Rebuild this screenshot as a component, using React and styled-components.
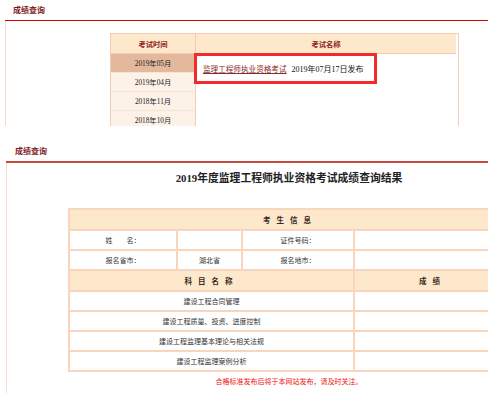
import React from 'react';
import styled, { createGlobalStyle } from 'styled-components';

const GlobalStyle = createGlobalStyle`
  html, body {
    margin: 0;
    padding: 0;
    background: #ffffff;
    overflow: hidden;
  }
  body {
    font-family: "Liberation Serif", "Noto Sans CJK SC", serif;
    color: #333;
  }
`;

const Page = styled.div`
  width: 580px;
`;

const Section = styled.section`
  margin-top: ${(p) => p.$top || 0}px;
`;

const SectionTitle = styled.div`
  height: ${(p) => p.$h}px;
  line-height: ${(p) => p.$h}px;
  padding-left: ${(p) => p.$indent}px;
  font-family: "Noto Sans CJK SC", sans-serif;
  font-size: 8px;
  font-weight: 700;
  color: #7e1a1a;
`;

const Rule = styled.div`
  margin-left: ${(p) => p.$indent}px;
  border-top: ${(p) => p.$thick}px solid ${(p) => p.$color};
`;

const Panel = styled.div`
  margin-left: ${(p) => p.$indent}px;
  width: ${(p) => p.$w}px;
  height: ${(p) => p.$h}px;
  border-left: 1px solid #f8dccb;
  padding-top: ${(p) => p.$pad}px;
  overflow: hidden;
`;

/* ---------- top: exam list ---------- */

const ExamGrid = styled.div`
  display: grid;
  grid-template-columns: 85px 260px;
  grid-template-rows: 20px repeat(4, 19px);
  width: 347px;
  margin: 0 auto;
  border: 1px solid #f1cdb3;
  border-bottom: none;
`;

const HeadCell = styled.div`
  background: #fde8cc;
  border-bottom: 1px solid #f1cdb3;
  border-right: ${(p) => (p.$divider ? '1px solid #f1cdb3' : 'none')};
  display: flex;
  align-items: center;
  justify-content: center;
  font-family: "Noto Sans CJK SC", sans-serif;
  font-size: 7.3px;
  font-weight: 700;
  color: #8e2418;
`;

const MonthCell = styled.div`
  grid-column: 1;
  background: ${(p) => (p.$active ? '#e3b89c' : '#fdf2e8')};
  border-right: 1px solid #f1cdb3;
  border-bottom: 1px solid #f8e2d2;
  display: flex;
  align-items: center;
  justify-content: center;
  font-size: 7.3px;
  color: #222;
`;

const NameCell = styled.div`
  grid-column: 2;
  grid-row: 2 / span 4;
  background: #fff;
`;

const Highlight = styled.div`
  margin: -1px 0 0 -2px;
  width: 183px;
  height: 31px;
  box-sizing: border-box;
  border: 3px solid #f42a2a;
  display: flex;
  align-items: center;
  gap: 5px;
  padding-left: 6px;
`;

const ExamLink = styled.a`
  font-family: "Noto Sans CJK SC", sans-serif;
  font-size: 7.6px;
  color: #8a2a2a;
  text-decoration: underline;
`;

const ExamDate = styled.span`
  font-size: 8px;
  color: #111;
`;

/* ---------- bottom: score result ---------- */

const ResultTitle = styled.h1`
  margin: 6px 0 21px;
  height: 18px;
  line-height: 18px;
  text-align: center;
  font-size: 10.8px;
  font-weight: 700;
  color: #222;
`;

const ScoreGrid = styled.div`
  display: grid;
  grid-template-columns: 106px 63px 110px 155px;
  grid-template-rows: 19px 18px 18px 19px repeat(4, 18px);
  gap: 2px;
  padding: 2px;
  width: 442px;
  box-sizing: border-box;
  margin: 0 auto;
  background: #f8d6bd;
  font-family: "Noto Sans CJK SC", sans-serif;
  font-size: 7px;
  color: #333;
`;

const Cell = styled.div`
  grid-column: ${(p) => p.$span || 'auto'};
  background: ${(p) => (p.$head ? '#fde8cb' : '#ffffff')};
  font-weight: ${(p) => (p.$head ? 700 : 400)};
  letter-spacing: ${(p) => (p.$head ? '6px' : '0')};
  font-size: ${(p) => (p.$head ? '7.5px' : '7px')};
  color: ${(p) => (p.$head ? '#3a2a20' : '#333')};
  display: flex;
  align-items: center;
  justify-content: center;
  white-space: pre;
`;

const Note = styled.p`
  margin: 3px 0 0;
  line-height: 12px;
  text-align: center;
  font-family: "Noto Sans CJK SC", sans-serif;
  font-size: 7px;
  color: #f01010;
`;

const months = ['2019年05月', '2019年04月', '2018年11月', '2018年10月'];

const subjects = [
  '建设工程合同管理',
  '建设工程质量、投资、进度控制',
  '建设工程监理基本理论与相关法规',
  '建设工程监理案例分析',
];

export default function App() {
  return (
    <Page>
      <GlobalStyle />

      <Section>
        <SectionTitle $h={20} $indent={13}>成绩查询</SectionTitle>
        <Rule $indent={5} $thick={1} $color="#d40000" />
        <Panel $indent={5} $w={557} $h={93} $pad={12}>
          <ExamGrid>
            <HeadCell $divider>考试时间</HeadCell>
            <HeadCell>考试名称</HeadCell>
            {months.map((m, i) => (
              <MonthCell key={m} $active={i === 0}>
                {m}
              </MonthCell>
            ))}
            <NameCell>
              <Highlight>
                <ExamLink href="#">监理工程师执业资格考试</ExamLink>
                <ExamDate>2019年07月17日发布</ExamDate>
              </Highlight>
            </NameCell>
          </ExamGrid>
        </Panel>
      </Section>

      <Section $top={14}>
        <SectionTitle $h={21} $indent={15}>成绩查询</SectionTitle>
        <Rule $indent={6} $thick={2} $color="#c9483e" />
        <Panel $indent={6} $w={564} $h={230} $pad={0}>
          <ResultTitle>2019年度监理工程师执业资格考试成绩查询结果</ResultTitle>
          <ScoreGrid>
            <Cell $head $span="1 / span 4">考生信息</Cell>
            <Cell>{'姓　　名：'}</Cell>
            <Cell />
            <Cell>证件号码：</Cell>
            <Cell />
            <Cell>报名省市：</Cell>
            <Cell>湖北省</Cell>
            <Cell>报名地市：</Cell>
            <Cell />
            <Cell $head $span="1 / span 3">科目名称</Cell>
            <Cell $head>成绩</Cell>
            {subjects.map((s) => (
              <React.Fragment key={s}>
                <Cell $span="1 / span 3">{s}</Cell>
                <Cell />
              </React.Fragment>
            ))}
          </ScoreGrid>
          <Note>合格标准发布后将于本网站发布，请及时关注。</Note>
        </Panel>
      </Section>
    </Page>
  );
}
